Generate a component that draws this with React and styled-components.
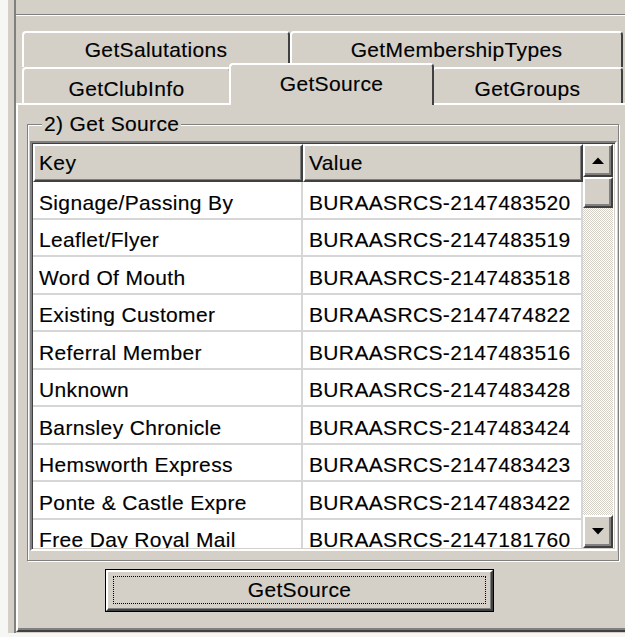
import React from 'react';
import styled, { createGlobalStyle } from 'styled-components';

const face = '#d4d0c8';
const shadow = '#808080';
const dark = '#404040';
const grid = '#d6d6d6';

const Global = createGlobalStyle`
  html, body { margin: 0; padding: 0; background: #f6f6f4; overflow: hidden; }
  body {
    font-family: "Liberation Sans", Arial, sans-serif;
    font-size: 21px;
    letter-spacing: 0.35px;
    color: #000;
    -webkit-text-stroke: 0.15px #000;
  }
  #root { width: 625px; height: 637px; overflow: hidden; }
`;

const Screen = styled.div`
  width: 625px;
  height: 637px;
  overflow: hidden;
  padding-left: 8px;
  box-sizing: border-box;
`;

const Window = styled.div`
  width: 700px;
  height: 633px;
  padding-left: 6px;
  box-sizing: border-box;
  background: ${face};
  display: flex;
`;

const Client = styled.div`
  flex: 1;
  border-left: 2px solid ${shadow};
  display: flex;
  flex-direction: column;
`;

const TopStrip = styled.div`
  height: 14px;
  flex: none;
  border-bottom: 1px solid ${shadow};
  box-shadow: 0 1px 0 #fff;
`;

const TabStrip = styled.div`
  padding-top: 16px;
  display: flex;
  flex-direction: column;
`;

const TabRow = styled.div`
  display: flex;
  align-items: flex-end;
  height: 36px;
  padding-left: 6px;
`;

const Tab = styled.div`
  width: ${(p) => p.$w}px;
  height: 36px;
  flex: none;
  box-sizing: border-box;
  border-style: solid;
  border-width: 2px 2px 0 2px;
  border-color: #fff ${dark} transparent #fff;
  border-radius: 4px 4px 0 0;
  display: flex;
  align-items: center;
  justify-content: center;
  padding-top: ${(p) => p.$drop || 0}px;
  white-space: nowrap;
  background: ${face};
`;

const ActiveTab = styled(Tab)`
  height: 42px;
  width: ${(p) => p.$w + 4}px;
  margin: -4px -2px -2px;
  padding-top: 0;
  padding-bottom: 3px;
  position: relative;
  z-index: 1;
`;

const TabPage = styled.div`
  flex: 1;
  margin-bottom: 1px;
  border-top: 2px solid #fff;
  border-left: 2px solid #fff;
  border-bottom: 2px solid ${dark};
  box-shadow: inset 0 -2px 0 ${shadow};
  padding-left: 9px;
  display: flex;
  flex-direction: column;
`;

const GroupBox = styled.div`
  margin-top: 19px;
  width: 592px;
  height: 437px;
  box-sizing: border-box;
  border: 1px solid ${shadow};
  box-shadow: inset 1px 1px 0 #fff, 1px 1px 0 #fff;
  padding: 0 1px 0 2px;
  display: flex;
  flex-direction: column;
`;

const Legend = styled.span`
  align-self: flex-start;
  margin: -13px 0 0 12px;
  padding: 0 2px;
  line-height: 24px;
  background: ${face};
`;

const ListView = styled.div`
  margin-top: 5px;
  width: 587px;
  height: 410px;
  box-sizing: border-box;
  border-style: solid;
  border-width: 2px;
  border-color: ${shadow} #fff #fff ${shadow};
  padding: 1px;
  box-shadow: inset 1px 1px 0 ${dark}, inset -1px -1px 0 ${face};
  background: #fff;
  display: flex;
`;

const Table = styled.div`
  width: 550px;
  flex: none;
  overflow: hidden;
  display: flex;
  flex-direction: column;
`;

const Header = styled.div`
  display: flex;
  height: 38px;
  flex: none;
`;

const HeaderCell = styled.div`
  width: ${(p) => p.$w}px;
  flex: none;
  box-sizing: border-box;
  border-style: solid;
  border-width: 2px;
  border-color: #fff ${dark} ${dark} #fff;
  box-shadow: inset -1px -1px 0 ${shadow};
  background: ${face};
  padding-left: 4px;
  display: flex;
  align-items: center;
`;

const Row = styled.div`
  display: flex;
  height: 37.5px;
  flex: none;
  box-sizing: border-box;
  border-bottom: 2px solid ${grid};
`;

const Cell = styled.div`
  width: ${(p) => p.$w}px;
  flex: none;
  box-sizing: border-box;
  border-right: 2px solid ${grid};
  padding: 6px 0 0 6px;
  display: flex;
  align-items: center;
  white-space: nowrap;
  overflow: hidden;
`;

const ScrollBar = styled.div`
  width: 30px;
  flex: none;
  display: flex;
  flex-direction: column;
`;

const ScrollButton = styled.div`
  height: ${(p) => p.$h}px;
  flex: none;
  box-sizing: border-box;
  border-style: solid;
  border-width: 2px;
  border-color: #fff ${dark} ${dark} #fff;
  box-shadow: inset -2px -2px 0 ${shadow};
  background: ${face};
  display: flex;
  align-items: center;
  justify-content: center;
`;

const Track = styled.div`
  flex: 1;
  background: repeating-conic-gradient(${face} 0 25%, #fff 0 50%) 0 0 / 2px 2px;
`;

const PushButton = styled.div`
  margin: 8px 0 0 78px;
  width: 389px;
  height: 43px;
  box-sizing: border-box;
  border: 1px solid #000;
  display: flex;
`;

const ButtonFace = styled.div`
  flex: 1;
  border-style: solid;
  border-width: 2px;
  border-color: #fff ${dark} ${dark} #fff;
  box-shadow: inset -1px -1px 0 ${shadow};
  background: ${face};
  padding: 4px 5px 5px 5px;
  display: flex;
`;

const FocusRect = styled.div`
  flex: 1;
  border: 1px dotted #000;
  display: flex;
  align-items: center;
  justify-content: center;
`;

const Arrow = ({ down }) => (
  <svg width="12" height="7" viewBox="0 0 12 7">
    <polygon points={down ? '0,0 12,0 6,6.5' : '6,0.5 12,7 0,7'} fill="#000" />
  </svg>
);

const rows = [
  ['Signage/Passing By', 'BURAASRCS-2147483520'],
  ['Leaflet/Flyer', 'BURAASRCS-2147483519'],
  ['Word Of Mouth', 'BURAASRCS-2147483518'],
  ['Existing Customer', 'BURAASRCS-2147474822'],
  ['Referral Member', 'BURAASRCS-2147483516'],
  ['Unknown', 'BURAASRCS-2147483428'],
  ['Barnsley Chronicle', 'BURAASRCS-2147483424'],
  ['Hemsworth Express', 'BURAASRCS-2147483423'],
  ['Ponte & Castle Expre', 'BURAASRCS-2147483422'],
  ['Free Day Royal Mail', 'BURAASRCS-2147181760'],
];

export default function App() {
  return (
    <Screen>
      <Global />
      <Window>
        <Client>
          <TopStrip />
          <TabStrip>
            <TabRow>
              <Tab $w={268}>GetSalutations</Tab>
              <Tab $w={333}>GetMembershipTypes</Tab>
            </TabRow>
            <TabRow>
              <Tab $w={209} $drop={5}>GetClubInfo</Tab>
              <ActiveTab $w={201}>GetSource</ActiveTab>
              <Tab $w={191} $drop={5}>GetGroups</Tab>
            </TabRow>
          </TabStrip>
          <TabPage>
            <GroupBox>
              <Legend>2) Get Source</Legend>
              <ListView>
                <Table>
                  <Header>
                    <HeaderCell $w={270}>Key</HeaderCell>
                    <HeaderCell $w={280}>Value</HeaderCell>
                  </Header>
                  {rows.map(([k, v]) => (
                    <Row key={k}>
                      <Cell $w={270}>{k}</Cell>
                      <Cell $w={280}>{v}</Cell>
                    </Row>
                  ))}
                </Table>
                <ScrollBar>
                  <ScrollButton $h={33}><Arrow /></ScrollButton>
                  <ScrollButton $h={31} />
                  <Track />
                  <ScrollButton $h={33}><Arrow down /></ScrollButton>
                </ScrollBar>
              </ListView>
            </GroupBox>
            <PushButton>
              <ButtonFace>
                <FocusRect>GetSource</FocusRect>
              </ButtonFace>
            </PushButton>
          </TabPage>
        </Client>
      </Window>
    </Screen>
  );
}
